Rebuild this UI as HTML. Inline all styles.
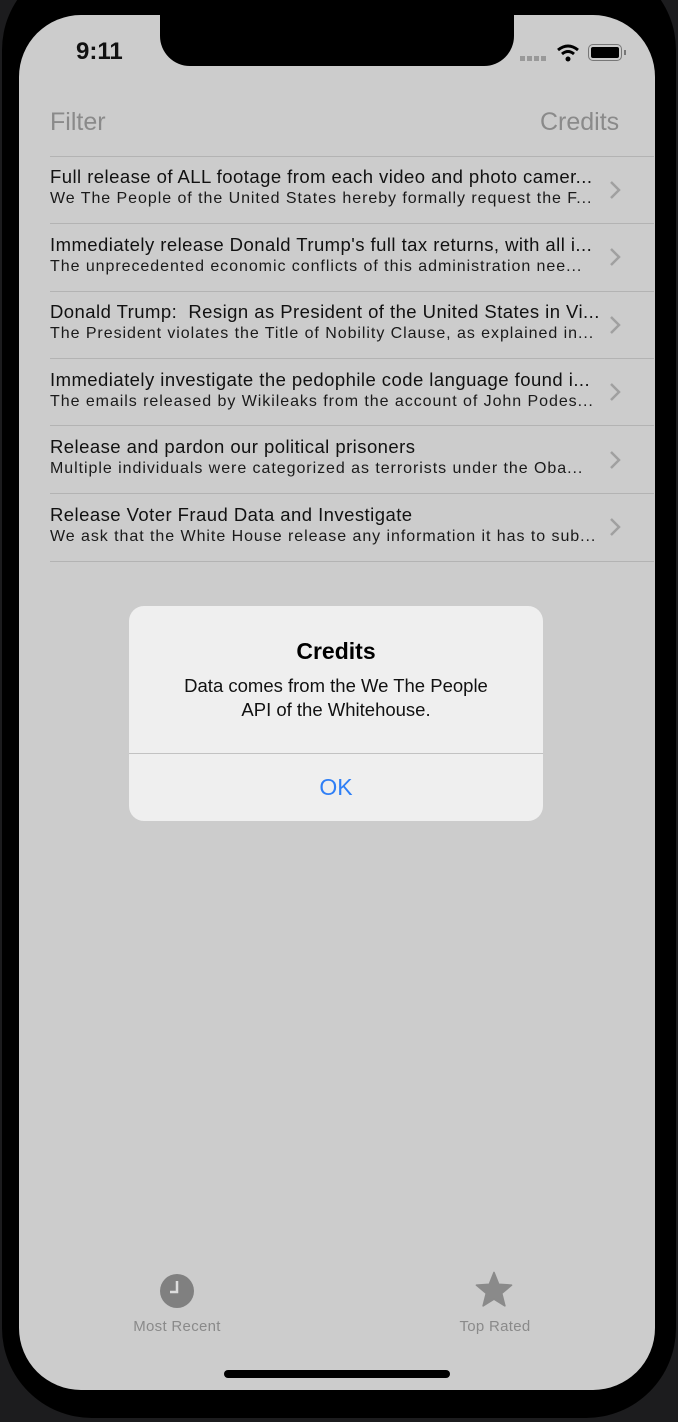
<!DOCTYPE html>
<html><head><meta charset="utf-8"><style>
*{margin:0;padding:0;box-sizing:border-box}
body{width:678px;height:1422px;background:#1c1c1e;overflow:hidden;position:relative;font-family:"Liberation Sans",sans-serif}
.frame{position:absolute;left:2px;top:-40px;width:674px;height:1458px;background:#000;border-radius:90px}
.abs{position:absolute}
.nav{color:#8a8a8a;font-size:25px}
.sep{position:absolute;left:50px;right:24px;height:1px;background:#b3b3b3}
.row{position:absolute;left:50px;width:560px}
.t{font-size:18.5px;color:#111;white-space:nowrap;line-height:23px;letter-spacing:.45px}
.s{font-size:16px;color:#1a1a1a;white-space:nowrap;line-height:22px;letter-spacing:.95px}
.chev{position:absolute;left:608px}
.alert{position:absolute;left:129px;top:606px;width:414px;height:215px;background:#efefef;border-radius:15px;text-align:center}
.tab{font-size:15px;color:#8a8a8a;position:absolute;text-align:center;width:160px;letter-spacing:.3px}
</style></head><body>
<div class="frame"></div>
<div class="abs" style="left:19px;top:15px;width:636px;height:1375px;border-radius:62px;overflow:hidden">
  <div style="position:absolute;inset:0;background:#cccccc"></div>
  <div class="abs" style="left:141px;top:0;width:354px;height:51px;background:#000;border-radius:0 0 30px 30px"></div>
</div>
<div class="abs" style="left:76px;top:38px;font-size:24px;font-weight:bold;color:#111">9:11</div>
<div class="abs" style="left:520px;top:56px;width:28px;height:5px;background:repeating-linear-gradient(90deg,#999 0 5px,transparent 5px 7px)"></div>
<svg class="abs" style="left:556px;top:43px" width="24" height="20" viewBox="0 0 24 20"><path d="M2 7 Q12 -1 22 7" stroke="#000" stroke-width="3" fill="none"/><path d="M6 11 Q12 6 18 11" stroke="#000" stroke-width="3" fill="none"/><circle cx="12" cy="16" r="2.5" fill="#000"/></svg>
<div class="abs" style="left:588px;top:44px;width:34px;height:17px;border:1.5px solid #777;border-radius:5px;padding:2px"><div style="width:100%;height:100%;background:#000;border-radius:2px"></div></div>
<div class="abs" style="left:624px;top:50px;width:2px;height:5px;background:#777"></div>

<div class="abs nav" style="left:50px;top:108px">Filter</div>
<div class="abs nav" style="left:540px;top:108px">Credits</div>

<div class="sep" style="top:156px"></div>
<div class="row" style="top:165px"><div class="t">Full release of ALL footage from each video and photo camer...</div><div class="s">We The People of the United States hereby formally request the F...</div></div>
<div class="sep" style="top:223px"></div>
<div class="row" style="top:233px"><div class="t">Immediately release Donald Trump's full tax returns, with all i...</div><div class="s">The unprecedented economic conflicts of this administration nee...</div></div>
<div class="sep" style="top:291px"></div>
<div class="row" style="top:300px"><div class="t">Donald Trump:&nbsp; Resign as President of the United States in Vi...</div><div class="s">The President violates the Title of Nobility Clause, as explained in...</div></div>
<div class="sep" style="top:358px"></div>
<div class="row" style="top:368px"><div class="t">Immediately investigate the pedophile code language found i...</div><div class="s">The emails released by Wikileaks from the account of John Podes...</div></div>
<div class="sep" style="top:425px"></div>
<div class="row" style="top:435px"><div class="t">Release and pardon our political prisoners</div><div class="s">Multiple individuals were categorized as terrorists under the Oba...</div></div>
<div class="sep" style="top:493px"></div>
<div class="row" style="top:503px"><div class="t">Release Voter Fraud Data and Investigate</div><div class="s">We ask that the White House release any information it has to sub...</div></div>
<div class="sep" style="top:561px"></div>

<svg class="chev" style="top:180px" width="14" height="20"><path d="M3 2 L11 10 L3 18" stroke="#a0a0a0" stroke-width="2.5" fill="none"/></svg>
<svg class="chev" style="top:247px" width="14" height="20"><path d="M3 2 L11 10 L3 18" stroke="#a0a0a0" stroke-width="2.5" fill="none"/></svg>
<svg class="chev" style="top:315px" width="14" height="20"><path d="M3 2 L11 10 L3 18" stroke="#a0a0a0" stroke-width="2.5" fill="none"/></svg>
<svg class="chev" style="top:382px" width="14" height="20"><path d="M3 2 L11 10 L3 18" stroke="#a0a0a0" stroke-width="2.5" fill="none"/></svg>
<svg class="chev" style="top:450px" width="14" height="20"><path d="M3 2 L11 10 L3 18" stroke="#a0a0a0" stroke-width="2.5" fill="none"/></svg>
<svg class="chev" style="top:517px" width="14" height="20"><path d="M3 2 L11 10 L3 18" stroke="#a0a0a0" stroke-width="2.5" fill="none"/></svg>

<div class="alert">
  <div style="position:absolute;left:0;right:0;top:32px;font-size:23px;font-weight:bold;color:#000">Credits</div>
  <div style="position:absolute;left:0;right:0;top:68px;font-size:18.5px;line-height:24px;color:#111">Data comes from the We The People<br>API of the Whitehouse.</div>
  <div style="position:absolute;left:0;right:0;top:147px;height:1px;background:#c2c2c2"></div>
  <div style="position:absolute;left:0;right:0;top:168px;font-size:23px;color:#2f7ff6">OK</div>
</div>

<svg class="abs" style="left:159px;top:1273px" width="36" height="36"><circle cx="18" cy="18" r="17" fill="#808080"/><path d="M18 8 V19 H11" stroke="#ddd" stroke-width="2.5" fill="none"/></svg>
<div class="tab" style="left:97px;top:1318px">Most Recent</div>
<svg class="abs" style="left:474px;top:1270px" width="40" height="40" viewBox="0 0 24 24"><path d="M12 1.5 L14.8 8.6 L22.5 9.1 L16.6 14 L18.5 21.5 L12 17.4 L5.5 21.5 L7.4 14 L1.5 9.1 L9.2 8.6 Z" fill="#8a8a8a" stroke="#8a8a8a" stroke-width="1" stroke-linejoin="round"/></svg>
<div class="tab" style="left:415px;top:1318px">Top Rated</div>

<div class="abs" style="left:224px;top:1370px;width:226px;height:8px;background:#000;border-radius:4px"></div>
</body></html>
